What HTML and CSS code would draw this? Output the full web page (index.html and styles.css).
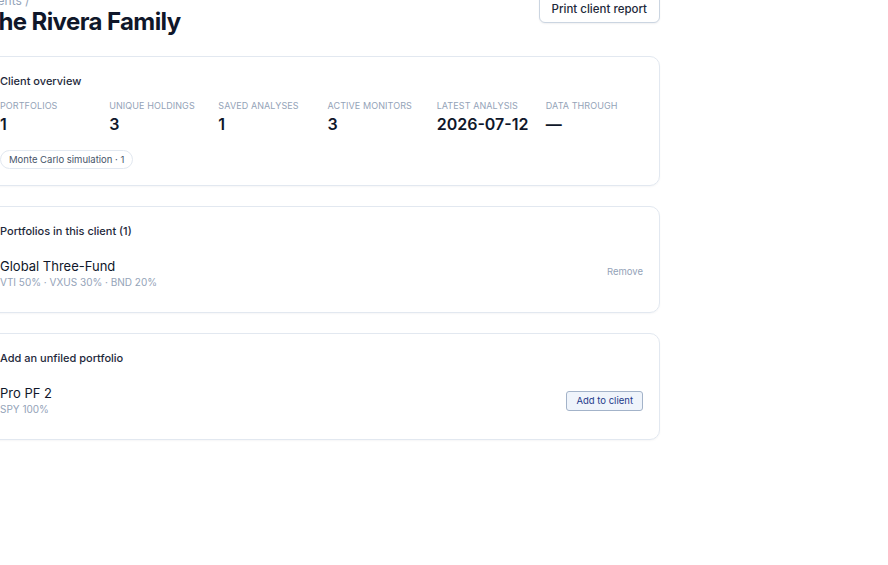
FILE: index.html
```html
<!DOCTYPE html>
<html lang="en">
<head>
    <meta charset="UTF-8">
    <meta name="viewport" content="width=device-width, initial-scale=1.0">
    <title>The Rivera Family</title>
    <link rel="stylesheet" href="styles.css">
</head>
<body>

<div class="page">
    <div class="page-header">
        <div>
            <div class="crumbs">Clients /</div>
            <h1>The Rivera Family</h1>
        </div>
        <button class="btn-print">Print client report</button>
    </div>

    <div class="card">
        <h2>Client overview</h2>
        <div class="stats">
            <div class="stat">
                <div class="stat-label">Portfolios</div>
                <div class="stat-value">1</div>
            </div>
            <div class="stat">
                <div class="stat-label">Unique holdings</div>
                <div class="stat-value">3</div>
            </div>
            <div class="stat">
                <div class="stat-label">Saved analyses</div>
                <div class="stat-value">1</div>
            </div>
            <div class="stat">
                <div class="stat-label">Active monitors</div>
                <div class="stat-value">3</div>
            </div>
            <div class="stat">
                <div class="stat-label">Latest analysis</div>
                <div class="stat-value">2026-07-12</div>
            </div>
            <div class="stat">
                <div class="stat-label">Data through</div>
                <div class="stat-value">&mdash;</div>
            </div>
        </div>
        <div class="chips">
            <span class="chip">Monte Carlo simulation · 1</span>
        </div>
    </div>

    <div class="card">
        <h2>Portfolios in this client (1)</h2>
        <div class="rows">
            <div class="row">
                <div>
                    <div class="row-name">Global Three-Fund</div>
                    <div class="row-sub">VTI 50% · VXUS 30% · BND 20%</div>
                </div>
                <a class="link-remove" href="#">Remove</a>
            </div>
        </div>
    </div>

    <div class="card">
        <h2>Add an unfiled portfolio</h2>
        <div class="rows">
            <div class="row">
                <div>
                    <div class="row-name">Pro PF 2</div>
                    <div class="row-sub">SPY 100%</div>
                </div>
                <button class="btn-add">Add to client</button>
            </div>
        </div>
    </div>
</div>

</body>
</html>
```

FILE: styles.css
```css
body {
    margin: 0;
    font-family: Inter, "Noto Sans", sans-serif;
    color: #0f172a;
    background: #fff;
}
.page {
    width: 677px;
    margin: -7px 0 0 -17px;
}
.page-header {
    display: flex;
    justify-content: space-between;
    align-items: flex-start;
    margin-bottom: 21px;
}
.crumbs {
    font-size: 12px;
    line-height: 16px;
    color: #94a3b8;
}
h1 {
    margin: 0;
    font-size: 24px;
    line-height: 26px;
    font-weight: 700;
    letter-spacing: -0.025em;
    color: #0f172a;
}
.btn-print {
    margin-top: 1px;
    padding: 0 12px;
    height: 29px;
    font-family: inherit;
    font-size: 11.5px;
    font-weight: 500;
    color: #1e293b;
    background: #fff;
    border: 1px solid #cbd5e1;
    border-radius: 6px;
    box-shadow: 0 1px 2px rgba(15, 23, 42, 0.06);
}
.card {
    border: 1px solid #e2e8f0;
    border-radius: 10px;
    padding: 16px;
    margin-bottom: 20px;
    box-shadow: 0 1px 2px rgba(15, 23, 42, 0.04);
}
h2 {
    margin: 0;
    font-size: 11px;
    line-height: 16px;
    font-weight: 500;
    color: #1e293b;
}
.stats {
    display: grid;
    grid-template-columns: repeat(6, 1fr);
    column-gap: 12px;
    margin-top: 11px;
}
.stat-label {
    font-size: 9px;
    line-height: 12px;
    text-transform: uppercase;
    letter-spacing: 0.01em;
    color: #94a3b8;
    margin-bottom: 2px;
}
.stat-value {
    font-size: 16px;
    line-height: 20px;
    font-weight: 600;
    color: #0f172a;
}
.chips {
    margin-top: 16px;
    display: flex;
    gap: 6px;
}
.chip {
    display: inline-block;
    font-size: 9.5px;
    line-height: 13px;
    padding: 2px 8px;
    border: 1px solid #e2e8f0;
    border-radius: 999px;
    color: #475569;
}
.rows {
    margin-top: 11px;
}
.row {
    display: flex;
    justify-content: space-between;
    align-items: center;
    padding: 8px 0 7px;
}
.row-name {
    font-size: 13px;
    line-height: 17px;
    color: #0f172a;
}
.row-sub {
    font-size: 10px;
    line-height: 14px;
    color: #94a3b8;
}
.link-remove {
    font-size: 9.5px;
    margin-bottom: 4px;
    color: #94a3b8;
    text-decoration: none;
}
.btn-add {
    font-family: inherit;
    font-size: 9.5px;
    height: 20px;
    padding: 0 9px;
    color: #1e3a8a;
    background: #eff4fb;
    border: 1px solid #a3b3c9;
    border-radius: 3px;
}
```
